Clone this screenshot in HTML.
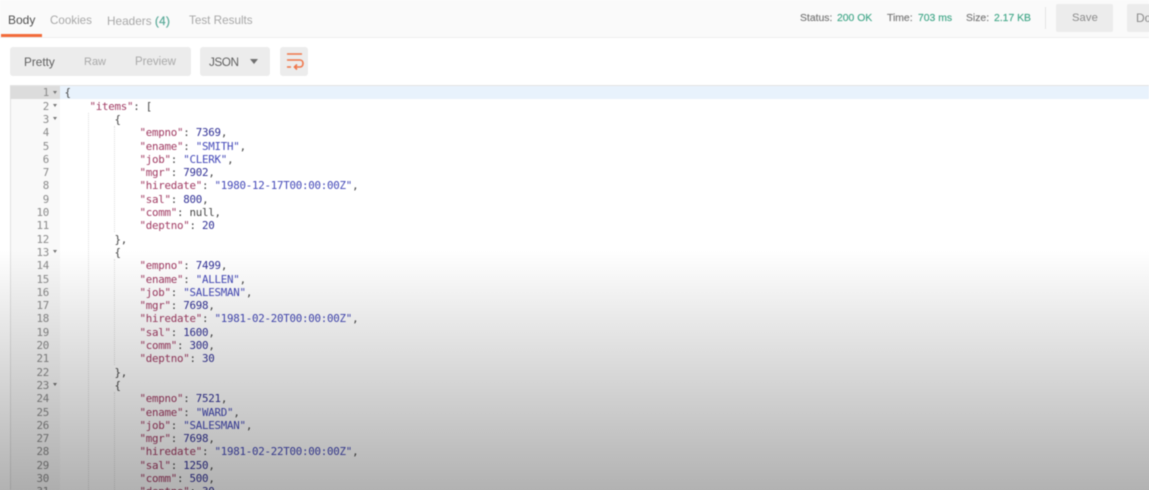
<!DOCTYPE html>
<html><head><meta charset="utf-8"><style>
html,body{margin:0;padding:0;background:#fff}
#p{position:relative;width:1149px;height:490px;overflow:hidden;background:#fff;font-family:"Liberation Sans",sans-serif}
#in{position:absolute;left:0;top:0;width:1149px;height:490px;filter:blur(.5px)}
.a{position:absolute;white-space:pre}
#code{position:absolute;left:0;top:86.4px;width:1149px;font:10.8px/13.31px "DejaVu Sans Mono",monospace;letter-spacing:-.25px}
.l{height:13.31px;position:relative;white-space:pre}
.n{position:absolute;left:0;width:49px;text-align:right;color:#8a8a8a}
.f{position:absolute;left:53px;top:4.5px;width:0;height:0;border:2.5px solid transparent;border-top:3px solid #777;border-bottom:0}
.c{position:absolute;left:64.5px;color:#444}
.k{color:#a03a62}.s{color:#4348b8}.d{color:#303096}
.g{position:absolute;width:0;border-left:1px dotted #ddd}
</style></head><body><div id="p"><div id="in">
<div class="a" style="left:0;top:0;width:1149px;height:37px;background:#fafafa;border-bottom:1px solid #eee"></div>
<div class="a" style="left:1px;top:34px;width:41px;height:2.5px;background:#f26b3a"></div>
<div class="a" style="left:8px;top:13px;font-size:12px;color:#505050">Body</div>
<div class="a" style="left:50px;top:14px;font-size:11.6px;color:#a8a8a8">Cookies</div>
<div class="a" style="left:107px;top:14px;font-size:11.8px;color:#a8a8a8">Headers <span style="color:#5cab9a;-webkit-text-stroke:.25px #5cab9a;letter-spacing:.3px">(4)</span></div>
<div class="a" style="left:189px;top:14px;font-size:11.7px;color:#a8a8a8">Test Results</div>
<div class="a" style="left:800px;top:13px;font-size:10.4px;color:#777;-webkit-text-stroke:.15px #777">Status:</div>
<div class="a" style="left:837px;top:13px;font-size:10.4px;color:#3fa687;-webkit-text-stroke:.15px #3fa687">200 OK</div>
<div class="a" style="left:887px;top:13px;font-size:10.4px;color:#777;-webkit-text-stroke:.15px #777">Time:</div>
<div class="a" style="left:918px;top:13px;font-size:10.4px;color:#3fa687;-webkit-text-stroke:.15px #3fa687">703 ms</div>
<div class="a" style="left:966px;top:13px;font-size:10.4px;color:#777;-webkit-text-stroke:.15px #777">Size:</div>
<div class="a" style="left:994px;top:13px;font-size:10.4px;color:#3fa687;-webkit-text-stroke:.15px #3fa687">2.17 KB</div>
<div class="a" style="left:1045px;top:7px;width:1px;height:22px;background:#e4e4e4"></div>
<div class="a" style="left:1056px;top:4px;width:57px;height:28px;background:#ececec;border-radius:2px"></div>
<div class="a" style="left:1072px;top:12px;font-size:11.2px;letter-spacing:.1px;color:#8a8a8a">Save</div>
<div class="a" style="left:1127px;top:4px;width:30px;height:28px;background:#ececec;border-radius:2px"></div>
<div class="a" style="left:1136px;top:11px;font-size:12px;color:#8a8a8a">Do</div>

<div class="a" style="left:10px;top:47px;width:181px;height:29px;background:#ececec;border-radius:3px"></div>
<div class="a" style="left:24px;top:55px;font-size:11.8px;color:#606060">Pretty</div>
<div class="a" style="left:84px;top:56px;font-size:11px;color:#a8a8a8">Raw</div>
<div class="a" style="left:135px;top:56px;font-size:11.5px;color:#a8a8a8">Preview</div>
<div class="a" style="left:200px;top:47px;width:70px;height:29px;background:#ececec;border-radius:3px"></div>
<div class="a" style="left:209px;top:55px;font-size:11.8px;letter-spacing:-.5px;color:#606060">JSON</div>
<div class="a" style="left:249.5px;top:59px;width:0;height:0;border:4px solid transparent;border-top:5px solid #707070;border-bottom:0"></div>
<div class="a" style="left:280px;top:47px;width:28px;height:29px;background:#ececec;border-radius:3px"></div>
<svg class="a" style="left:280px;top:47px" width="28" height="29" viewBox="0 0 28 29" fill="none" stroke="#f0764a" stroke-width="1.6"><path d="M7 7H22M7 13H20C24 13 24 20 20 20H15M17 17.5L14.5 20L17 22.5M7 20H11"/></svg>

<div class="a" style="left:10px;top:85px;width:1139px;height:405px;background:#fff;border-top:1px solid #e4e4e4;box-sizing:border-box"></div>
<div class="a" style="left:10px;top:86px;width:50px;height:404px;background:#f9f9f9;border-left:1px solid #e0e0e0;box-sizing:border-box"></div>
<div class="a" style="left:60px;top:86px;width:1089px;height:13px;background:#e8f2fc"></div>
<div class="a" style="left:10px;top:86px;width:50px;height:13px;background:#dcdcdc"></div>
<div class="g" style="left:88px;top:113px;height:377px"></div>
<div class="g" style="left:114px;top:126px;height:106px"></div>
<div class="g" style="left:114px;top:259px;height:106px"></div>
<div class="g" style="left:114px;top:392px;height:98px"></div>

<div id="code">
<div class="l"><span class="n">1</span><i class="f"></i><span class="c">{</span></div>
<div class="l"><span class="n">2</span><i class="f"></i><span class="c">    <span class="k">"items"</span>: [</span></div>
<div class="l"><span class="n">3</span><i class="f"></i><span class="c">        {</span></div>
<div class="l"><span class="n">4</span><span class="c">            <span class="k">"empno"</span>: <span class="d">7369</span>,</span></div>
<div class="l"><span class="n">5</span><span class="c">            <span class="k">"ename"</span>: <span class="s">"SMITH"</span>,</span></div>
<div class="l"><span class="n">6</span><span class="c">            <span class="k">"job"</span>: <span class="s">"CLERK"</span>,</span></div>
<div class="l"><span class="n">7</span><span class="c">            <span class="k">"mgr"</span>: <span class="d">7902</span>,</span></div>
<div class="l"><span class="n">8</span><span class="c">            <span class="k">"hiredate"</span>: <span class="s">"1980-12-17T00:00:00Z"</span>,</span></div>
<div class="l"><span class="n">9</span><span class="c">            <span class="k">"sal"</span>: <span class="d">800</span>,</span></div>
<div class="l"><span class="n">10</span><span class="c">            <span class="k">"comm"</span>: null,</span></div>
<div class="l"><span class="n">11</span><span class="c">            <span class="k">"deptno"</span>: <span class="d">20</span></span></div>
<div class="l"><span class="n">12</span><span class="c">        },</span></div>
<div class="l"><span class="n">13</span><i class="f"></i><span class="c">        {</span></div>
<div class="l"><span class="n">14</span><span class="c">            <span class="k">"empno"</span>: <span class="d">7499</span>,</span></div>
<div class="l"><span class="n">15</span><span class="c">            <span class="k">"ename"</span>: <span class="s">"ALLEN"</span>,</span></div>
<div class="l"><span class="n">16</span><span class="c">            <span class="k">"job"</span>: <span class="s">"SALESMAN"</span>,</span></div>
<div class="l"><span class="n">17</span><span class="c">            <span class="k">"mgr"</span>: <span class="d">7698</span>,</span></div>
<div class="l"><span class="n">18</span><span class="c">            <span class="k">"hiredate"</span>: <span class="s">"1981-02-20T00:00:00Z"</span>,</span></div>
<div class="l"><span class="n">19</span><span class="c">            <span class="k">"sal"</span>: <span class="d">1600</span>,</span></div>
<div class="l"><span class="n">20</span><span class="c">            <span class="k">"comm"</span>: <span class="d">300</span>,</span></div>
<div class="l"><span class="n">21</span><span class="c">            <span class="k">"deptno"</span>: <span class="d">30</span></span></div>
<div class="l"><span class="n">22</span><span class="c">        },</span></div>
<div class="l"><span class="n">23</span><i class="f"></i><span class="c">        {</span></div>
<div class="l"><span class="n">24</span><span class="c">            <span class="k">"empno"</span>: <span class="d">7521</span>,</span></div>
<div class="l"><span class="n">25</span><span class="c">            <span class="k">"ename"</span>: <span class="s">"WARD"</span>,</span></div>
<div class="l"><span class="n">26</span><span class="c">            <span class="k">"job"</span>: <span class="s">"SALESMAN"</span>,</span></div>
<div class="l"><span class="n">27</span><span class="c">            <span class="k">"mgr"</span>: <span class="d">7698</span>,</span></div>
<div class="l"><span class="n">28</span><span class="c">            <span class="k">"hiredate"</span>: <span class="s">"1981-02-22T00:00:00Z"</span>,</span></div>
<div class="l"><span class="n">29</span><span class="c">            <span class="k">"sal"</span>: <span class="d">1250</span>,</span></div>
<div class="l"><span class="n">30</span><span class="c">            <span class="k">"comm"</span>: <span class="d">500</span>,</span></div>
<div class="l"><span class="n">31</span><span class="c">            <span class="k">"deptno"</span>: <span class="d">30</span></span></div>
</div>
</div>
<div class="a" style="left:0;top:250px;width:1149px;height:240px;background:linear-gradient(to bottom,rgba(0,0,0,0),rgba(0,0,0,.3))"></div>
</div></body></html>
